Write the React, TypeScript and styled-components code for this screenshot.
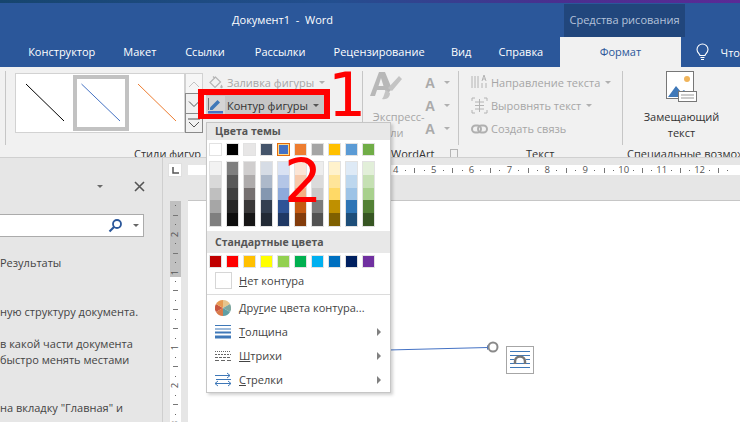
import { FunctionComponent, ReactNode } from "react";
import styled, { createGlobalStyle } from "styled-components";

const GlobalStyle = createGlobalStyle`
  html, body {
    margin: 0;
    padding: 0;
    background: #ffffff;
    overflow: hidden;
  }
`;

const AppRoot = styled.div`
  position: relative;
  width: 740px;
  height: 422px;
  overflow: hidden;
  display: flex;
  flex-direction: column;
  font-family: "Open Sans", "Noto Sans", sans-serif;
  font-size: 11px;
  color: #444444;
`;
const TopStrip = styled.div`
  height: 3px;
  background: linear-gradient(90deg, #16456e 0%, #234f8f 45%, #4a2f8f 75%, #5b2a96 100%);
`;
const TitleBar = styled.div`
  height: 34px;
  background: #2b579a;
  display: flex;
`;
const TitleText = styled.div`
  margin-left: 232px;
  width: 332px;
  padding-top: 9px;
  box-sizing: border-box;
  color: #ffffff;
  font-size: 11px;
  line-height: 16px;
  white-space: pre;
`;
const ContextTitle = styled.div`
  width: 121px;
  height: 33px;
  margin-top: 1px;
  background: #21467c;
  color: #b4c2da;
  font-size: 11px;
  line-height: 32px;
  text-align: center;
`;
const TabBar = styled.div`
  height: 30px;
  background: #2b579a;
  display: flex;
  padding-left: 14px;
`;
const Tab = styled.div<{ $w: number }>`
  width: ${(p) => p.$w}px;
  text-align: center;
  color: #ffffff;
  font-size: 11px;
  line-height: 30px;
  white-space: nowrap;
`;
const ActiveTab = styled.div`
  width: 121px;
  margin-left: 3px;
  background: #f1f1f1;
  color: #2b579a;
  font-size: 11px;
  line-height: 30px;
  text-align: center;
`;
const TellMe = styled.div`
  display: flex;
  align-items: center;
  gap: 11px;
  margin-left: 14px;
  color: #ffffff;
  font-size: 11px;
  white-space: nowrap;
`;
const Ribbon = styled.div`
  height: 91px;
  box-sizing: border-box;
  background: #f1f1f1;
  border-bottom: 1px solid #d0d0d0;
  display: flex;
  padding: 4px 0 0 5px;
  overflow: hidden;
`;
const Group = styled.div<{ $w: number }>`
  width: ${(p) => p.$w}px;
  flex: none;
  height: 74px;
  box-sizing: border-box;
  border-right: 1px solid #c6c6c6;
  position: relative;
`;
const FirstEdge = styled.div`
  width: 1px;
  height: 74px;
  background: #c6c6c6;
  flex: none;
`;
const GroupBody = styled.div`
  height: 70px;
  display: flex;
`;
const GroupLabel = styled.div<{ $left: number }>`
  margin-top: 5px;
  padding-left: ${(p) => p.$left}px;
  color: #333333;
  font-size: 11px;
  line-height: 16px;
  white-space: nowrap;
  display: flex;
  align-items: center;
`;
const Gallery = styled.div`
  margin: 2px 0 0 9px;
  width: 170px;
  height: 60px;
  box-sizing: border-box;
  background: #ffffff;
  border: 1px solid #d2d2d2;
  display: flex;
  align-items: center;
  padding-left: 1px;
`;
const StyleCell = styled.div<{ $selected?: boolean }>`
  width: 56px;
  height: 56px;
  box-sizing: border-box;
  border: 4px solid ${(p) => (p.$selected ? "#c2c2c2" : "transparent")};
`;
const GalleryButtons = styled.div`
  margin-top: 2px;
  width: 18px;
  display: flex;
  flex-direction: column;
  height: 60px;
`;
const GalleryButton = styled.div<{ $h: number; $on?: boolean }>`
  height: ${(p) => p.$h}px;
  box-sizing: border-box;
  border: 1px solid ${(p) => (p.$on ? "#8a8a8a" : "#d2d2d2")};
  margin-bottom: -1px;
  background: ${(p) => (p.$on ? "#f1f1f1" : "#f6f6f6")};
  display: flex;
  align-items: center;
  justify-content: center;
`;
const CommandColumn = styled.div<{ $left: number }>`
  margin-left: ${(p) => p.$left}px;
  display: flex;
  flex-direction: column;
  padding-top: 0;
`;
const Command = styled.div<{ $disabled?: boolean; $active?: boolean }>`
  height: 23px;
  display: flex;
  align-items: center;
  gap: 2px;
  color: ${(p) => (p.$disabled ? "#a6a6a6" : "#333333")};
  font-size: 11px;
  white-space: nowrap;
  background: ${(p) => (p.$active ? "#c6c6c6" : "transparent")};
`;
const CommandIcon = styled.div<{ $active?: boolean }>`
  width: 19px;
  height: 20px;
  display: flex;
  align-items: center;
  justify-content: center;
  background: ${(p) => (p.$active ? "#d4d4d4" : "transparent")};
`;
const Caret = styled.span<{ $c?: string; $side?: boolean }>`
  display: inline-block;
  width: 0;
  height: 0;
  margin-left: 3px;
  border-left: 3px solid transparent;
  border-right: 3px solid transparent;
  border-top: 3px solid ${(p) => p.$c ?? "#b0b0b0"};
`;
const WordArtBody = styled.div`
  display: flex;
  width: 100%;
  padding-left: 7px;
  box-sizing: border-box;
`;
const QuickStyles = styled.div`
  width: 55px;
  display: flex;
  flex-direction: column;
  color: #a6a6a6;
  line-height: 16px;
  font-size: 11px;
`;
const BigA = styled.div`
  height: 38px;
  display: flex;
`;
const LetterColumn = styled.div`
  display: flex;
  flex-direction: column;
  gap: 0;
`;
const LetterRow = styled.div`
  height: 23px;
  display: flex;
  align-items: center;
  color: #aaaaaa;
  font-family: "Liberation Sans", sans-serif;
  font-weight: 700;
  font-size: 14px;
  gap: 6px;
`;
const Launcher = styled.span`
  margin-left: 16px;
  width: 8px;
  height: 8px;
  border: 1px solid #b5b5b5;
  display: inline-block;
`;
const AltBody = styled.div`
  display: flex;
  flex-direction: column;
  align-items: center;
  width: 156px;
  color: #333333;
  line-height: 16px;
  font-size: 11px;
`;
const AltIcon = styled.div`
  height: 38px;
  margin-bottom: 1px;
`;
const Workspace = styled.div`
  flex: 1;
  display: grid;
  grid-template-columns: 163px 25px 1fr;
  grid-template-rows: 43px 1fr;
  background: #e6e6e6;
  min-height: 0;
`;
const NavPane = styled.div`
  grid-row: 1 / 3;
  border-right: 1px solid #cfcfcf;
  position: relative;
  display: flex;
  flex-direction: column;
`;
const NavHeader = styled.div`
  height: 56px;
  flex: none;
  display: flex;
  align-items: center;
  justify-content: flex-end;
  gap: 31px;
  padding: 0 17px 0 0;
  box-sizing: border-box;
`;
const SearchBox = styled.div`
  width: 144px;
  height: 23px;
  flex: none;
  box-sizing: border-box;
  background: #ffffff;
  border: 1px solid #ababab;
  border-left: none;
  display: flex;
  align-items: center;
  justify-content: flex-end;
  gap: 7px;
  padding-right: 4px;
`;
const NavLines = styled.div`
  padding-top: 18px;
  font-size: 11px;
  line-height: 16px;
  color: #444444;
  white-space: nowrap;
`;
const NavLine = styled.div<{ $gap?: number }>`
  margin-top: ${(p) => p.$gap ?? 0}px;
`;
const RulerCorner = styled.div`
  display: flex;
  align-items: flex-start;
  padding: 5px 0 0 5px;
`;
const TabStop = styled.div`
  width: 14px;
  height: 14px;
  background: #ffffff;
  display: flex;
  align-items: center;
  justify-content: center;
  border: 1px solid #e0e0e0;
  box-sizing: border-box;
`;
const RulerTrack = styled.div`
  display: flex;
  align-items: flex-start;
  padding-top: 7px;
  overflow: hidden;
  border-bottom: 0;
  position: relative;
`;
const RulerStrip = styled.div`
  height: 10px;
  width: 100%;
  background: #ffffff;
  display: flex;
  font-size: 9.5px;
  line-height: 10px;
  color: #555555;
  padding-left: 203px;
`;
const RulerCell = styled.div`
  width: 37.9px;
  flex: none;
  display: grid;
  grid-template-columns: repeat(4, 1fr);
  align-items: center;
  justify-items: center;
`;
const RulerDot = styled.span`
  width: 1px;
  height: 1px;
  background: #666666;
`;
const RulerTick = styled.span`
  width: 1px;
  height: 5px;
  background: #777777;
`;
const VRuler = styled.div`
  display: flex;
  justify-content: center;
  padding-left: 3px;
  box-sizing: border-box;
  width: 23px;
  overflow: hidden;
`;
const VStrip = styled.div`
  width: 11px;
  margin-left: -2px;
  background: linear-gradient(180deg, #c0c0c0 0, #c0c0c0 76px, #ffffff 76px);
  display: flex;
  flex-direction: column;
  font-size: 9.5px;
  color: #555555;
`;
const VCell = styled.div`
  height: 37.9px;
  flex: none;
  display: grid;
  grid-template-rows: repeat(4, 1fr);
  align-items: center;
  justify-items: center;
`;
const VNumber = styled.span`
  transform: rotate(-90deg);
  line-height: 9px;
`;
const VDot = styled.span`
  width: 1px;
  height: 1px;
  background: #666666;
`;
const VTick = styled.span`
  width: 5px;
  height: 1px;
  background: #777777;
`;
const Page = styled.div`
  background: #ffffff;
  border-top: 1px solid #c6c6c6;
  position: relative;
  margin-top: -1px;
`;
const ConnectorDrawing = styled.svg`
  position: absolute;
  left: 200px;
  top: 135px;
`;
const LayoutBadge = styled.svg`
  position: absolute;
  left: 318px;
  top: 145px;
`;
const ShapeMenu = styled.div`
  position: absolute;
  left: 206px;
  top: 122px;
  width: 185px;
  height: 271px;
  box-sizing: border-box;
  background: #ffffff;
  border: 1px solid #c6c6c6;
  box-shadow: 2px 2px 3px rgba(0, 0, 0, 0.18);
  z-index: 2;
`;
const MenuHeading = styled.div<{ $h: number }>`
  height: ${(p) => p.$h}px;
  background: #e8e8e8;
  padding-left: 8px;
  color: #555555;
  font-weight: 700;
  font-size: 10.5px;
  line-height: ${(p) => p.$h}px;
  display: flex;
  align-items: center;
`;
const SwatchGrid = styled.div<{ $top: number; $bottom: number }>`
  display: flex;
  gap: 4px;
  padding: ${(p) => p.$top}px 0 ${(p) => p.$bottom}px 2px;
`;
const Swatch = styled.div<{ $c: string; $selected?: boolean }>`
  width: 13px;
  height: 13px;
  box-sizing: border-box;
  background: ${(p) => p.$c};
  border: 1px solid ${(p) => (p.$selected ? "#e46c0a" : "#e2e2e2")};
  outline: ${(p) => (p.$selected ? "1px solid #ffd98a" : "none")};
  outline-offset: -2px;
`;
const ShadeColumn = styled.div`
  width: 13px;
  box-sizing: border-box;
  border: 1px solid #e2e2e2;
  display: flex;
  flex-direction: column;
`;
const Shade = styled.div<{ $c: string }>`
  height: 12.8px;
  background: ${(p) => p.$c};
`;
const MenuRow = styled.div<{ $h: number }>`
  height: ${(p) => p.$h}px;
  display: flex;
  align-items: center;
  color: #444444;
  font-size: 11px;
  position: relative;
  white-space: nowrap;
`;
const MenuIcon = styled.div`
  width: 32px;
  flex: none;
  display: flex;
  justify-content: center;
`;
const EmptyBox = styled.div`
  width: 15px;
  height: 15px;
  border: 1px solid #d6d6d6;
`;
const MenuDivider = styled.div`
  height: 1px;
  background: #dcdcdc;
  margin: 3px 0 1px;
`;
const SubArrow = styled.span`
  position: absolute;
  right: 9px;
  width: 0;
  height: 0;
  border-top: 4px solid transparent;
  border-bottom: 4px solid transparent;
  border-left: 4px solid #808080;
`;
const RedFrame = styled.div`
  position: absolute;
  left: 198px;
  top: 89px;
  width: 132px;
  height: 30px;
  box-sizing: border-box;
  border: 6px solid #ff0000;
  border-bottom-width: 5px;
  z-index: 3;
`;
const RedNumber = styled.div<{ $x: number; $y: number; $s: number }>`
  position: absolute;
  left: ${(p) => p.$x}px;
  top: ${(p) => p.$y}px;
  color: #ff0000;
  font-family: "DejaVu Sans", sans-serif;
  font-size: ${(p) => p.$s}px;
  line-height: 1;
  z-index: 4;
`;

const themeColumns = [
  ["#ffffff", "#f2f2f2", "#d9d9d9", "#bfbfbf", "#a6a6a6", "#7f7f7f"],
  ["#000000", "#7f7f7f", "#595959", "#404040", "#262626", "#0d0d0d"],
  ["#e7e6e6", "#d0cece", "#aeabab", "#757070", "#3a3838", "#171616"],
  ["#44546a", "#d6dce5", "#adb9ca", "#8497b0", "#333f50", "#222a35"],
  ["#4472c4", "#d9e2f3", "#b4c6e7", "#8eaadb", "#2f5496", "#1f3864"],
  ["#ed7d31", "#fbe5d5", "#f7caac", "#f4b183", "#c55a11", "#833c0b"],
  ["#a5a5a5", "#ededed", "#dbdbdb", "#c9c9c9", "#7b7b7b", "#525252"],
  ["#ffc000", "#fff2cc", "#ffe599", "#ffd966", "#bf9000", "#7f6000"],
  ["#5b9bd5", "#deeaf6", "#bdd7ee", "#9dc3e6", "#2e75b5", "#1e4e79"],
  ["#70ad47", "#e2efd9", "#c5e0b3", "#a8d08d", "#538135", "#375623"],
];
const standardColors = [
  "#c00000", "#ff0000", "#ffc000", "#ffff00", "#92d050",
  "#00b050", "#00b0f0", "#0070c0", "#002060", "#7030a0",
];
const tabs: [string, number][] = [
  ["Конструктор", 96],
  ["Макет", 61],
  ["Ссылки", 70],
  ["Рассылки", 81],
  ["Рецензирование", 118],
  ["Вид", 47],
  ["Справка", 73],
];

const LineSample: FunctionComponent<{ color: string; selected?: boolean }> = ({ color, selected }) => (
  <StyleCell $selected={selected}>
    <svg width="48" height="48" viewBox="0 0 48 48">
      <line x1={selected ? 4.5 : 5} y1="5" x2={selected ? 43 : 43} y2="42" stroke={color} strokeWidth="1" />
    </svg>
  </StyleCell>
);

const Chevron: FunctionComponent<{ up?: boolean; c?: string }> = ({ up, c = "#555" }) => (
  <svg width="12" height="8" viewBox="0 0 12 8">
    <path d={up ? "M1 7 6 2l5 5" : "M1 1.5 6 6.5l5-5"} fill="none" stroke={c} strokeWidth="1" />
  </svg>
);

const Ruler: FunctionComponent = () => (
  <RulerStrip>
    {[4, 5, 6, 7, 8, 9, 10, 11, 12].map((n) => (
      <RulerCell key={n}>
        <span>{n}</span>
        <RulerDot />
        <RulerTick />
        <RulerDot />
      </RulerCell>
    ))}
  </RulerStrip>
);

const VerticalRuler: FunctionComponent = () => (
  <VStrip>
    {["2", "1", "", "1", "2", "3"].map((n, i) => (
      <VCell key={i}>
        <VDot />
        <VTick />
        <VDot />
        {n ? <VNumber>{n}</VNumber> : <VTick />}
      </VCell>
    ))}
  </VStrip>
);

const MenuEntry: FunctionComponent<{ icon: ReactNode; mark: string; rest: string; lead?: string; sub?: boolean }> = ({
  icon,
  mark,
  rest,
  lead,
  sub,
}) => (
  <MenuRow $h={24}>
    <MenuIcon>{icon}</MenuIcon>
    <span>
      {lead}
      <u>{mark}</u>
      {rest}
    </span>
    {sub && <SubArrow />}
  </MenuRow>
);

const App: FunctionComponent = () => {
  return (
    <AppRoot>
      <GlobalStyle />
      <TopStrip />
      <TitleBar>
        <TitleText>Документ1  -  Word</TitleText>
        <ContextTitle>Средства рисования</ContextTitle>
      </TitleBar>
      <TabBar>
        {tabs.map(([name, w]) => (
          <Tab key={name} $w={w}>
            {name}
          </Tab>
        ))}
        <ActiveTab>Формат</ActiveTab>
        <TellMe>
          <svg width="15" height="18" viewBox="0 0 15 18">
            <path
              d="M5 12.5C4.6 10.5 2 9.6 2 6.5a5.5 5.5 0 0 1 11 0c0 3.100-2.600 4-3 6zM5.500 14.500h4M6 16.500h3"
              fill="none"
              stroke="#fff"
              strokeWidth="1.100"
            />
          </svg>
          <span>Что</span>
        </TellMe>
      </TabBar>
      <Ribbon>
        <FirstEdge />
        <Group $w={357}>
          <GroupBody>
            <Gallery>
              <LineSample color="#000000" />
              <LineSample color="#4472c4" selected />
              <LineSample color="#ed7d31" />
            </Gallery>
            <GalleryButtons>
              <GalleryButton $h={21}>
                <Chevron up c="#c4c4c4" />
              </GalleryButton>
              <GalleryButton $h={21} $on>
                <Chevron />
              </GalleryButton>
              <GalleryButton $h={20} $on>
                <svg width="12" height="10" viewBox="0 0 12 10">
                  <path d="M0 1h12M1 4l5 5 5-5" fill="none" stroke="#555" strokeWidth="1" />
                </svg>
              </GalleryButton>
            </GalleryButtons>
            <CommandColumn $left={3}>
              <Command $disabled>
                <CommandIcon>
                  <svg width="16" height="16" viewBox="0 0 16 16">
                    <path d="M7.500 2 2 7.500 7 12.500l5.500-5.500zM5 1.500l2 2" fill="none" stroke="#b4b4b4" strokeWidth="1.200" />
                    <path d="M13.500 9.500c.8 1.200 1.200 2 1.200 2.600a1.200 1.200 0 0 1-2.400 0c0-.6.4-1.400 1.200-2.600z" fill="#b4b4b4" />
                  </svg>
                </CommandIcon>
                Заливка фигуры
                <Caret />
              </Command>
              <Command $active>
                <CommandIcon $active>
                  <svg width="17" height="17" viewBox="0 0 17 17">
                    <path d="M3 10.500 10.500 3l2.500 2.500L5.500 13H3z" fill="#3f78b8" />
                    <path d="M1 14h15v2.500H1z" fill="#4472c4" />
                    <path d="M1 1h1v12H1z" fill="#777" />
                  </svg>
                </CommandIcon>
                Контур фигуры
                <Caret $c="#555" />
              </Command>
            </CommandColumn>
          </GroupBody>
          <GroupLabel $left={128}>Стили фигур</GroupLabel>
        </Group>
        <Group $w={96}>
          <GroupBody>
            <WordArtBody>
              <QuickStyles>
                <BigA>
                  <svg width="36" height="36" viewBox="0 0 36 36">
                    <path d="M0 25 9 1h6l7 17-5 5-2-4H7l-2 6zM8.500 15h5L11 7z" fill="#b8b8b8" />
                    <path d="M29 5l3 3-10 12-4-3zM16 19l4 3c0 4-3 7-8 6 2-2 2-6 4-9z" fill="#c4c4c4" />
                  </svg>
                </BigA>
                <span>&nbsp;Экспресс-</span>
                <span>&nbsp;стили</span>
              </QuickStyles>
              <LetterColumn>
                <LetterRow>
                  A<Caret />
                </LetterRow>
                <LetterRow>
                  A<Caret />
                </LetterRow>
                <LetterRow>
                  A<Caret />
                </LetterRow>
              </LetterColumn>
            </WordArtBody>
          </GroupBody>
          <GroupLabel $left={28}>
            WordArt
            <Launcher />
          </GroupLabel>
        </Group>
        <Group $w={164}>
          <GroupBody>
            <CommandColumn $left={11}>
              <Command $disabled>
                <CommandIcon>
                  <svg width="17" height="18" viewBox="0 0 17 18">
                    <path d="M1 2v12M4 2v12M7 2v12M11 9v5M15 9v5" stroke="#b4b4b4" fill="none" />
                    <path d="M11 7l2-6 2 6M11.800 5h2.500" stroke="#b4b4b4" fill="none" />
                  </svg>
                </CommandIcon>
                Направление текста
                <Caret />
              </Command>
              <Command $disabled>
                <CommandIcon>
                  <svg width="17" height="17" viewBox="0 0 17 17">
                    <path d="M1 4V1h3M13 1h3v3M1 13v3h3M13 16h3v-3" stroke="#b4b4b4" fill="none" />
                    <path d="M4 5h9M4 8.500h9M4 12h9M8.500 2v13" stroke="#b4b4b4" fill="none" />
                  </svg>
                </CommandIcon>
                Выровнять текст
                <Caret />
              </Command>
              <Command $disabled>
                <CommandIcon>
                  <svg width="17" height="10" viewBox="0 0 17 10">
                    <rect x="1" y="1.500" width="9" height="7" rx="3.500" fill="none" stroke="#b0b0b0" strokeWidth="2" />
                    <rect x="7" y="1.500" width="9" height="7" rx="3.500" fill="none" stroke="#b0b0b0" strokeWidth="2" />
                  </svg>
                </CommandIcon>
                Создать связь
              </Command>
            </CommandColumn>
          </GroupBody>
          <GroupLabel $left={67}>Текст</GroupLabel>
        </Group>
        <Group $w={118}>
          <GroupBody>
            <AltBody>
              <AltIcon>
                <svg width="32" height="32" viewBox="0 0 32 32">
                  <rect x="0.500" y="0.500" width="27" height="27" fill="#fff" stroke="#777" />
                  <circle cx="21" cy="8" r="3" fill="#f0b45a" />
                  <path d="M2 26l8-11 5 6 3-2 7 7z" fill="#3f78b8" />
                  <rect x="12.500" y="20.500" width="18" height="10" fill="#fff" stroke="#777" />
                  <path d="M15 24h13M15 27h13" stroke="#999" />
                </svg>
              </AltIcon>
              <span>Замещающий</span>
              <span>текст</span>
            </AltBody>
          </GroupBody>
          <GroupLabel $left={4}>Специальные возможности</GroupLabel>
        </Group>
      </Ribbon>
      <Workspace>
        <NavPane>
          <NavHeader>
            <Caret $c="#6a6a6a" />
            <svg width="11" height="11" viewBox="0 0 11 11">
              <path d="M1 1l9 9M10 1l-9 9" stroke="#555" strokeWidth="1.600" />
            </svg>
          </NavHeader>
          <SearchBox>
            <svg width="15" height="15" viewBox="0 0 15 15">
              <circle cx="9" cy="6" r="4" fill="none" stroke="#2b579a" strokeWidth="1.800" />
              <path d="M6 9l-4.500 4.500" stroke="#2b579a" strokeWidth="2.200" />
            </svg>
            <Caret $c="#666" />
          </SearchBox>
          <NavLines>
            <NavLine>Результаты</NavLine>
            <NavLine $gap={33}>ную структуру документа.</NavLine>
            <NavLine $gap={16}>в какой части документа</NavLine>
            <NavLine>быстро менять местами</NavLine>
            <NavLine $gap={32}>на вкладку "Главная" и</NavLine>
          </NavLines>
        </NavPane>
        <RulerCorner>
          <TabStop>
            <svg width="7" height="7" viewBox="0 0 7 7">
              <path d="M1 0v6h6" fill="none" stroke="#555" strokeWidth="1.500" />
            </svg>
          </TabStop>
        </RulerCorner>
        <RulerTrack>
          <Ruler />
        </RulerTrack>
        <VRuler>
          <VerticalRuler />
        </VRuler>
        <Page>
          <ConnectorDrawing width="112" height="24" viewBox="0 0 112 24">
            <line x1="0" y1="14" x2="100" y2="11.500" stroke="#4472c4" strokeWidth="1" />
            <path d="M99 9v5l3-2.500z" fill="#4472c4" />
            <circle cx="105" cy="11" r="4.500" fill="#fff" stroke="#8a8a8a" strokeWidth="2" />
          </ConnectorDrawing>
          <LayoutBadge width="28" height="28" viewBox="0 0 28 28">
            <rect x="0.500" y="0.500" width="27" height="27" fill="#fff" stroke="#a6a6a6" />
            <path d="M4 5.500h20M4 9.500h20M4 17.500h20M4 21.500h20M4 13.500h4M20 13.500h4" stroke="#3f78b8" />
            <path d="M9 18v-2.500a5 5 0 0 1 10 0V18" fill="none" stroke="#777" strokeWidth="2.500" />
          </LayoutBadge>
        </Page>
      </Workspace>
      <ShapeMenu>
        <MenuHeading $h={17}>Цвета темы</MenuHeading>
        <SwatchGrid $top={3} $bottom={5}>
          {themeColumns.map((col, i) => (
            <Swatch key={col[0]} $c={col[0]} $selected={i === 4} />
          ))}
        </SwatchGrid>
        <SwatchGrid $top={0} $bottom={4}>
          {themeColumns.map((col) => (
            <ShadeColumn key={col[0]}>
              {col.slice(1).map((c, i) => (
                <Shade key={i} $c={c} />
              ))}
            </ShadeColumn>
          ))}
        </SwatchGrid>
        <MenuHeading $h={22}>Стандартные цвета</MenuHeading>
        <SwatchGrid $top={2} $bottom={3}>
          {standardColors.map((c) => (
            <Swatch key={c} $c={c} />
          ))}
        </SwatchGrid>
        <MenuRow $h={20}>
          <MenuIcon>
            <EmptyBox />
          </MenuIcon>
          <span>
            <u>Н</u>ет контура
          </span>
        </MenuRow>
        <MenuDivider />
        <MenuEntry
          lead="Дру"
          mark="г"
          rest="ие цвета контура..."
          icon={
            <svg width="16" height="16" viewBox="0 0 16 16">
              <path d="M8 8V0a8 8 0 0 1 7 4z" fill="#e8c48c" />
              <path d="M8 8l7-4a8 8 0 0 1 0 8z" fill="#7fa8a0" />
              <path d="M8 8l7 4a8 8 0 0 1-7 4z" fill="#5f9fa5" />
              <path d="M8 8v8a8 8 0 0 1-7-4z" fill="#d97a4a" />
              <path d="M8 8l-7 4a8 8 0 0 1 0-8z" fill="#c9583f" />
              <path d="M8 8L1 4a8 8 0 0 1 7-4z" fill="#e89a52" />
            </svg>
          }
        />
        <MenuEntry
          mark="Т"
          rest="олщина"
          sub
          icon={
            <svg width="16" height="14" viewBox="0 0 16 14">
              <path d="M0 .5h16M0 4h16" stroke="#3f78b8" />
              <path d="M0 7.500h16" stroke="#3f78b8" strokeWidth="2" />
              <path d="M0 12h16" stroke="#3f78b8" strokeWidth="3" />
            </svg>
          }
        />
        <MenuEntry
          mark="Ш"
          rest="трихи"
          sub
          icon={
            <svg width="16" height="12" viewBox="0 0 16 12">
              <path d="M0 1.500h16" stroke="#666" strokeDasharray="1 1" />
              <path d="M0 4.500h16" stroke="#666" strokeDasharray="2 1" />
              <path d="M0 7.500h16" stroke="#666" strokeDasharray="3 1" />
              <path d="M0 10.500h16" stroke="#666" strokeDasharray="4 2" />
            </svg>
          }
        />
        <MenuEntry
          mark="С"
          rest="трелки"
          sub
          icon={
            <svg width="16" height="15" viewBox="0 0 16 15">
              <path d="M0 3.500h15M12 1l3 2.500L12 6M1 7.500h15M0 11.500h16M3 9l-3 2.500L3 14M13 9l3 2.500-3 2.500" fill="none" stroke="#3f78b8" />
            </svg>
          }
        />
      </ShapeMenu>
      <RedFrame />
      <RedNumber $x={328} $y={65} $s={60}>
        1
      </RedNumber>
      <RedNumber $x={284} $y={151} $s={60}>
        2
      </RedNumber>
    </AppRoot>
  );
};

export default App;
